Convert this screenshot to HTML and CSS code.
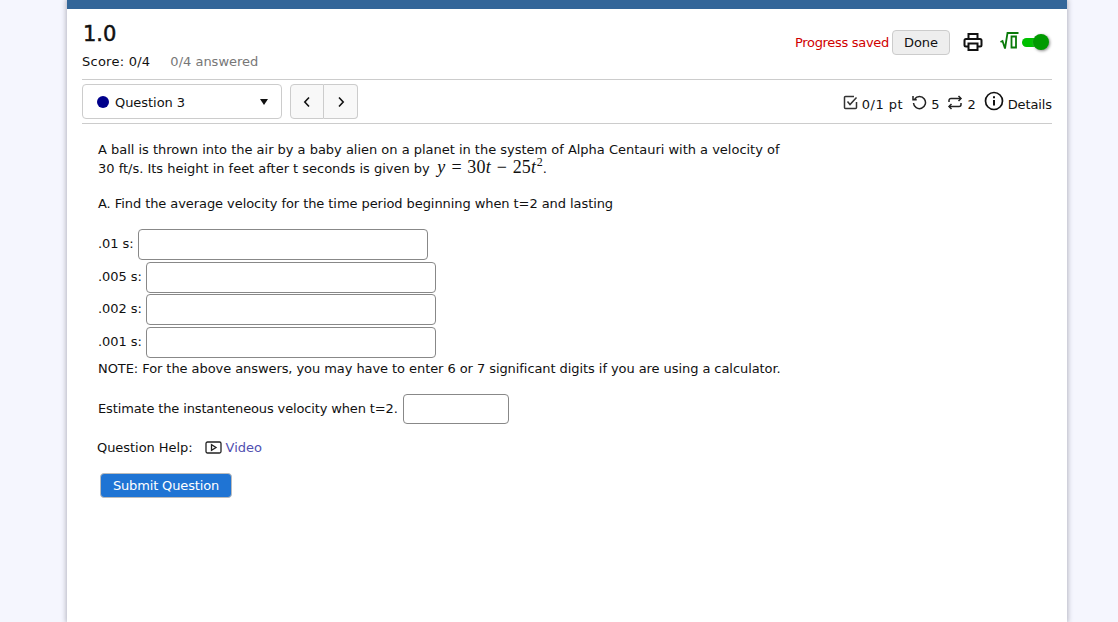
FILE: index.html
```html
<!DOCTYPE html>
<html lang="en">
<head>
<meta charset="utf-8">
<title>1.0</title>
<link rel="stylesheet" href="styles.css">
</head>
<body>
<main class="page">
  <header class="head">
    <div class="head-left">
      <h1 class="title">1.0</h1>
      <div class="score"><span>Score: 0/4</span><span class="answered">0/4 answered</span></div>
    </div>
    <div class="head-right">
      <span class="saved">Progress saved</span>
      <button class="done">Done</button>
      <svg class="print" width="20" height="20" viewBox="0 0 20 20" fill="none" stroke="#111" stroke-width="2"><path d="M5.500 7V2h9v5"/><path d="M5 14.500H3a1.500 1.500 0 0 1-1.500-1.500V8.500A1.500 1.500 0 0 1 3 7h14a1.500 1.500 0 0 1 1.500 1.500V13a1.500 1.500 0 0 1-1.500 1.500H15"/><rect x="5.500" y="11.500" width="9" height="6.500"/></svg>
      <span class="mathtoggle">
        <svg class="sqrt" width="19" height="18" viewBox="0 0 19 18" fill="none" stroke="#0a7a0a" stroke-width="1.800"><path d="M0.500 10l2-1 2.500 7.500L7.500 1h11"/><path d="M11.500 4.500h4.500v11h-4.500z"/></svg>
        <span class="track"><span class="knob"></span></span>
      </span>
    </div>
  </header>
  <nav class="qbar">
    <div class="qleft">
      <div class="select"><span class="dot"></span><span class="qname">Question 3</span><span class="caret"></span></div>
      <div class="pager">
        <button class="pg"><svg width="8" height="12" viewBox="0 0 8 12" fill="none" stroke="#111" stroke-width="1.600"><path d="M6 1.500L1.800 6 6 10.500"/></svg></button>
        <button class="pg"><svg width="8" height="12" viewBox="0 0 8 12" fill="none" stroke="#111" stroke-width="1.600"><path d="M2 1.500L6.200 6 2 10.500"/></svg></button>
      </div>
    </div>
    <div class="qright">
      <span class="stat"><svg width="15" height="15" viewBox="0 0 15 15" fill="none" stroke="#333" stroke-width="1.500"><path d="M13.500 7v5.500a1 1 0 0 1-1 1h-10a1 1 0 0 1-1-1v-10a1 1 0 0 1 1-1H11"/><path d="M4.500 6.500L7 9.500 13.500 2.500"/></svg><span class="stat-text pts">0/1 pt</span></span>
      <span class="stat"><svg width="16" height="15" viewBox="0 0 16 15" fill="none" stroke="#222" stroke-width="1.500"><path d="M3.700 4A6 6 0 1 1 2.500 8"/><path d="M2 1v3.700h3.700"/></svg><span class="stat-text">5</span></span>
      <span class="stat"><svg width="16" height="15" viewBox="0 0 16 15" fill="none" stroke="#222" stroke-width="1.500"><path d="M2 7V5.500a2 2 0 0 1 2-2h10"/><path d="M11.500 1l2.500 2.500L11.500 6"/><path d="M14 8v1.500a2 2 0 0 1-2 2H2"/><path d="M4.500 9L2 11.500 4.500 14"/></svg><span class="stat-text">2</span></span>
      <span class="stat details"><svg width="20" height="20" viewBox="0 0 20 20" fill="none" stroke="#111" stroke-width="1.700"><circle cx="10" cy="10" r="8.500"/><path d="M10 9v5.500" stroke-width="2"/><path d="M10 5.200v2" stroke-width="2"/></svg><span class="stat-text">Details</span></span>
    </div>
  </nav>
  <section class="question">
    <p class="intro">A ball is thrown into the air by a baby alien on a planet in the system of Alpha Centauri with a velocity of<br>30 ft/s. Its height in feet after t seconds is given by <span class="math"><i>y</i><span class="op">=</span>30<i>t</i><span class="op">−</span>25<i>t</i><sup>2</sup></span>.</p>
    <p class="part">A. Find the average velocity for the time period beginning when t=2 and lasting</p>
    <div class="rows">
      <div class="row"><label>.01 s:</label><input class="field" type="text"></div>
      <div class="row"><label>.005 s:</label><input class="field" type="text"></div>
      <div class="row"><label>.002 s:</label><input class="field" type="text"></div>
      <div class="row"><label>.001 s:</label><input class="field" type="text"></div>
    </div>
    <p class="note">NOTE: For the above answers, you may have to enter 6 or 7 significant digits if you are using a calculator.</p>
    <div class="row estimate"><label>Estimate the instanteneous velocity when t=2.</label><input class="field short" type="text"></div>
    <div class="help"><span>Question Help:</span><svg width="17" height="13" viewBox="0 0 17 13" fill="none" stroke="#222" stroke-width="1.300"><rect x="1" y="1" width="15" height="11" rx="1.500"/><path d="M6.500 3.700v5.600L11 6.500z"/></svg><a class="video" href="#">Video</a></div>
    <button class="submit">Submit Question</button>
  </section>
</main>
</body>
</html>
```
FILE: styles.css
```css
* { box-sizing: border-box; }
html, body { margin: 0; height: 100%; }
body {
  background: #f5f6fe;
  font-family: "DejaVu Sans", sans-serif;
  font-size: 13px;
  letter-spacing: -0.05px;
  color: #111;
  overflow: hidden;
}
.page {
  width: 1000px;
  height: 622px;
  margin-left: 67px;
  background: #fff;
  border-top: 9px solid #336699;
  padding: 0 15px;
  box-shadow: 0 0 5px 1px #b4b4c0;
}
.head {
  display: flex;
  justify-content: space-between;
  height: 71px;
  border-bottom: 1px solid #ccc;
}
.title { margin: 13px 0 0 1px; font-size: 21px; line-height: 24px; font-weight: 400; -webkit-text-stroke: 0.5px #111; }
.score { margin-top: 7px; display: flex; gap: 20px; line-height: 18px; letter-spacing: 0.25px; }
.answered { color: #777; letter-spacing: 0; }
.head-right { display: flex; align-items: center; height: 66px; }
.saved { color: #d00000; margin-right: 3px; letter-spacing: -0.3px; }
.done {
  width: 58px; height: 25px; padding: 0;
  border: 1px solid #ccc; border-radius: 4px;
  background: #eee; font: inherit; color: #111;
}
.print { margin-left: 13px; }
.mathtoggle { display: flex; align-items: center; margin-left: 17px; margin-right: 3px; }
.sqrt { margin-top: -2px; }
.track {
  display: block; position: relative;
  width: 18px; height: 9px; margin-left: 3px; margin-right: 9px;
  background: #00c000; border-radius: 5px;
}
.knob {
  position: absolute; right: -9px; top: -3.500px;
  width: 16px; height: 16px; border-radius: 50%;
  background: #009a00; box-shadow: 1px 1px 3px #888;
}
.qbar {
  display: flex; justify-content: space-between; align-items: center;
  height: 44px;
  border-bottom: 1px solid #ccc;
}
.qleft { display: flex; gap: 8px; }
.select {
  display: flex; align-items: center;
  width: 200px; height: 35px; padding: 0 13px 0 14px;
  border: 1px solid #ccc; border-radius: 4px;
}
.dot { width: 12px; height: 12px; border-radius: 50%; background: #00008b; margin-right: 6px; }
.qname { flex: 1; padding-top: 2px; }
.caret { border-top: 6px solid #111; border-left: 4px solid transparent; border-right: 4px solid transparent; }
.pager { display: flex; }
.pg {
  width: 34px; height: 35px; padding: 0;
  border: 1px solid #ccc; background: #f8f8f8;
  display: flex; align-items: center; justify-content: center;
}
.pg:first-child { border-radius: 4px 0 0 4px; }
.pg:last-child { border-radius: 0 4px 4px 0; border-left: 0; }
.qright { display: flex; align-items: center; gap: 8px; }
.stat { display: flex; align-items: center; gap: 4px; }
.stat-text { padding-top: 5px; }
.pts { letter-spacing: 0.5px; }
.stat svg { margin-top: 1px; }
.details { gap: 4px; letter-spacing: -0.1px; }
.details svg { margin-top: -2px; }
.question { padding: 16px 16px 0; }
.question p { margin: 0; }
.intro { line-height: 19px; letter-spacing: -0.015px; }
.math { font-family: "Liberation Serif", serif; font-size: 18px; line-height: 0; letter-spacing: 0.2px; margin-left: 3.500px; }
.math i { letter-spacing: 0.6px; }
.op { margin: 0 5.500px; }
.math sup { font-size: 12px; line-height: 0; }
.part { margin-top: 16px !important; line-height: 19px; letter-spacing: -0.07px; }
.rows { margin-top: 16px; display: flex; flex-direction: column; gap: 1.670px; }
.row { display: flex; align-items: center; gap: 4px; }
.row label { margin-top: -2px; }
.field {
  width: 290px; height: 31px;
  border: 1px solid #888; border-radius: 4px;
  background: #fff;
}
.short { width: 106px; height: 30px; }
.note { margin-top: 2px !important; line-height: 18px; letter-spacing: -0.07px; }
.estimate { margin-top: 16px; gap: 5px; }
.estimate label { margin-top: 0; letter-spacing: -0.14px; }
.help { display: flex; align-items: center; margin-top: 15px; margin-left: -1px; line-height: 18px; }
.help svg { margin: 0 4px 0 12px; }
.video { color: #5050b0; text-decoration: none; }
.submit {
  display: block; margin: 16px 0 0 2px;
  width: 132px; height: 25px; padding: 1px 0 0;
  background: #1f74d4; color: #fff; font: inherit; letter-spacing: -0.15px;
  border: 1px solid #bbb; border-radius: 4px;
}
```
